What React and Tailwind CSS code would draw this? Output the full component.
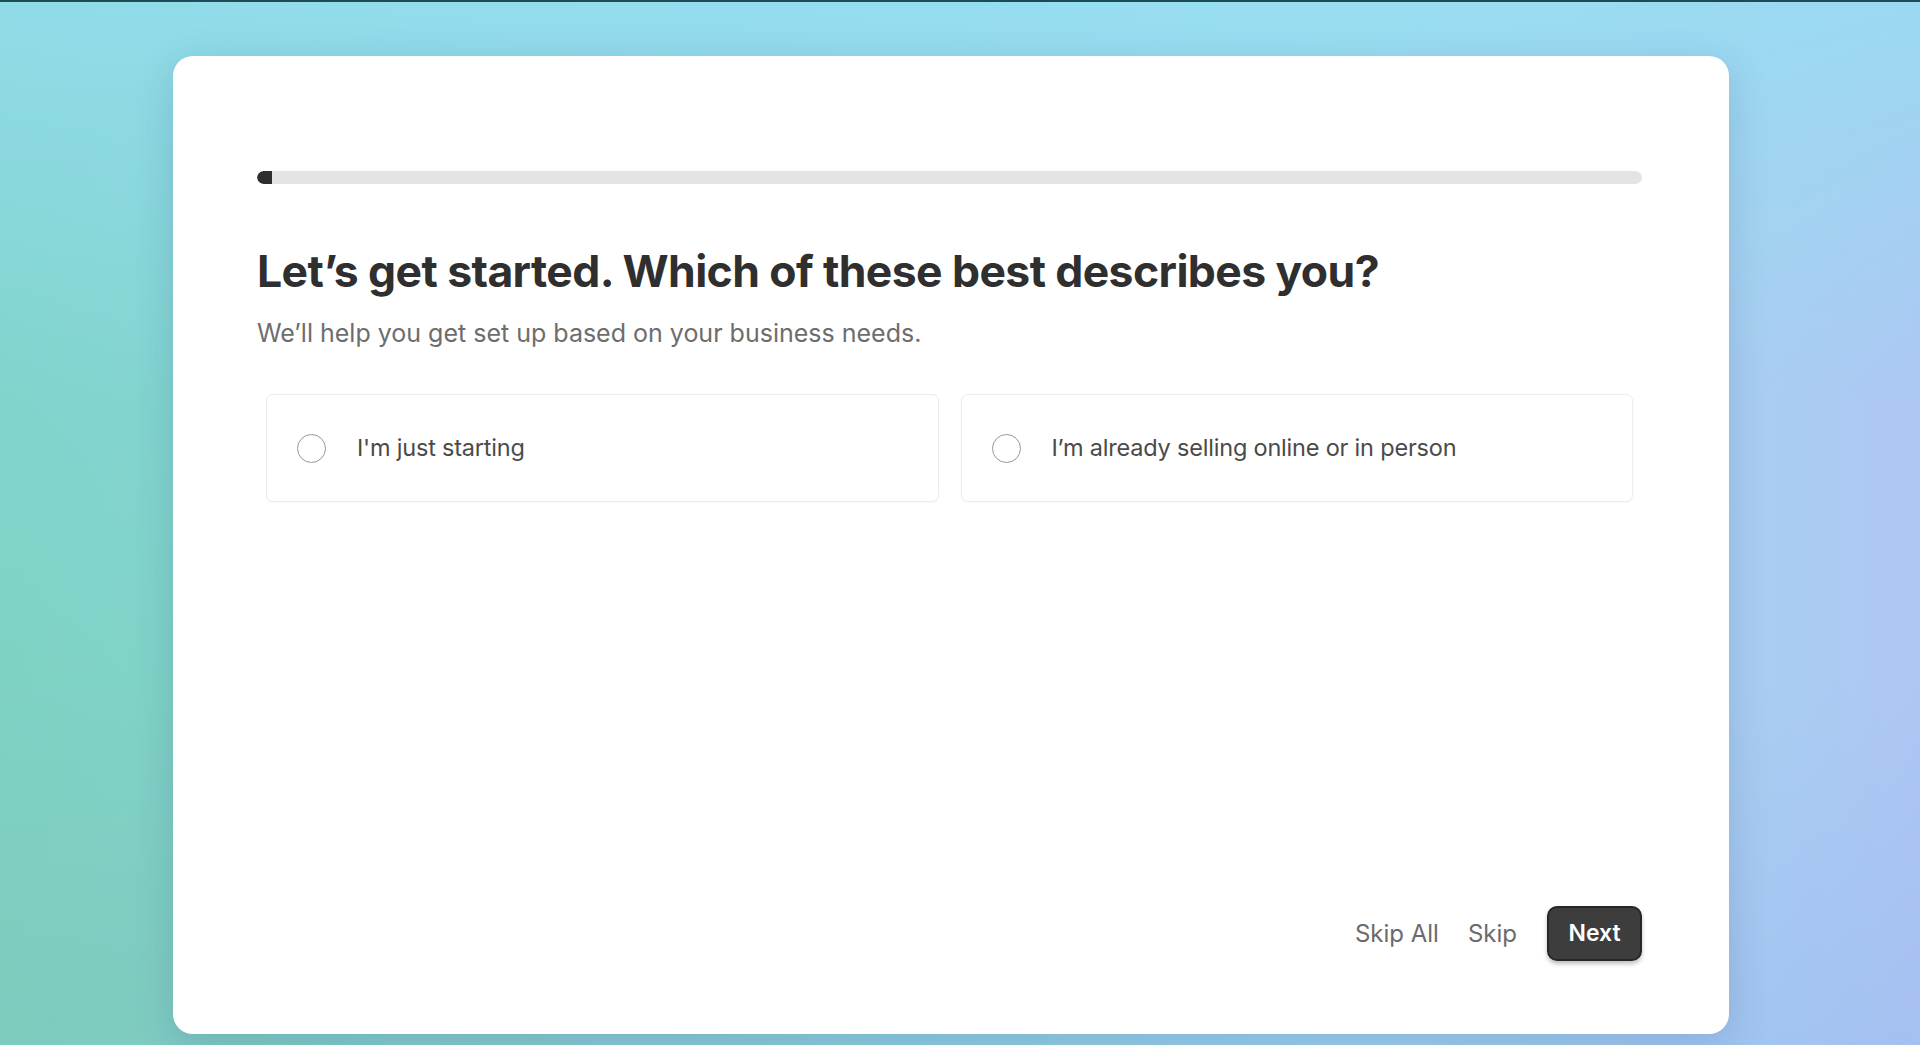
import { useState } from 'react'

const OPTIONS = [
  { key: 'starting', label: "I'm just starting" },
  { key: 'selling', label: 'I’m already selling online or in person' },
]

function Option({ label, selected, onSelect }) {
  return (
    <button
      onClick={onSelect}
      className="flex h-[108px] items-center gap-[31px] rounded-[7px] border border-[#ececec] bg-white pl-[30px] text-left shadow-[0_1px_2px_rgba(0,0,0,0.03)]"
    >
      <span className={`flex h-[29px] w-[29px] shrink-0 items-center justify-center rounded-full border-[1.5px] ${selected ? 'border-[#303030]' : 'border-[#979797]'}`}>
        {selected && <span className="h-[13px] w-[13px] rounded-full bg-[#303030]" />}
      </span>
      <span className="text-[23.5px] tracking-[-0.2px] text-[#4a4a4a]">{label}</span>
    </button>
  )
}

export default function App() {
  const [choice, setChoice] = useState(null)

  return (
    <div className="h-[1045px] w-full overflow-hidden border-t-2 border-[#1d4c57] bg-[linear-gradient(90deg,#80d4cc_0%,#8cd8e0_35%,#a2dcef_72%,#adc7f3_100%)] font-['Inter','Noto_Sans',sans-serif]">
      <div className="h-full w-full bg-[linear-gradient(180deg,rgba(150,222,242,0.75)_0%,rgba(150,222,242,0)_38%,rgba(0,0,0,0)_65%,rgba(140,170,235,0.25)_100%)]">
        <div className="h-full w-full bg-[radial-gradient(ellipse_at_0%_100%,rgba(120,205,170,0.55)_0%,rgba(120,205,170,0)_45%)] pt-[54px]">
          <div className="ml-[173px] flex h-[978px] w-[1556px] flex-col rounded-[20px] bg-white pl-[84px] pr-[87px] pt-[115px] pb-[73px] shadow-[0_10px_40px_rgba(40,70,130,0.2)]">
            {/* Progress */}
            <div className="h-[13px] w-full overflow-hidden rounded-full bg-[#e4e4e4]">
              <div className="h-full w-[15px] rounded-l-full bg-[#2e2e2e]" />
            </div>

            <h1 className="mt-[60px] text-[44.5px] font-bold leading-[54px] tracking-[-0.6px] text-[#2f2f2f]">
              Let’s get started. Which of these best describes you?
            </h1>
            <p className="mt-[19px] text-[25px] leading-[32px] text-[#6d6d6d]">
              We’ll help you get set up based on your business needs.
            </p>

            <div className="mx-[9px] mt-[45px] grid grid-cols-2 gap-[22px]">
              {OPTIONS.map((o) => (
                <Option key={o.key} label={o.label} selected={choice === o.key} onSelect={() => setChoice(o.key)} />
              ))}
            </div>

            <div className="mt-auto flex items-center justify-end">
              <button className="text-[24px] text-[#6b6b6b]">Skip All</button>
              <button className="ml-[29px] text-[24px] text-[#6b6b6b]">Skip</button>
              <button className="ml-[30px] h-[55px] w-[95px] rounded-[10px] border-2 border-[#272727] bg-[#3d3d3d] text-[23px] font-semibold text-white shadow-[0_3px_4px_rgba(0,0,0,0.25)]">
                Next
              </button>
            </div>
          </div>
        </div>
      </div>
    </div>
  )
}
